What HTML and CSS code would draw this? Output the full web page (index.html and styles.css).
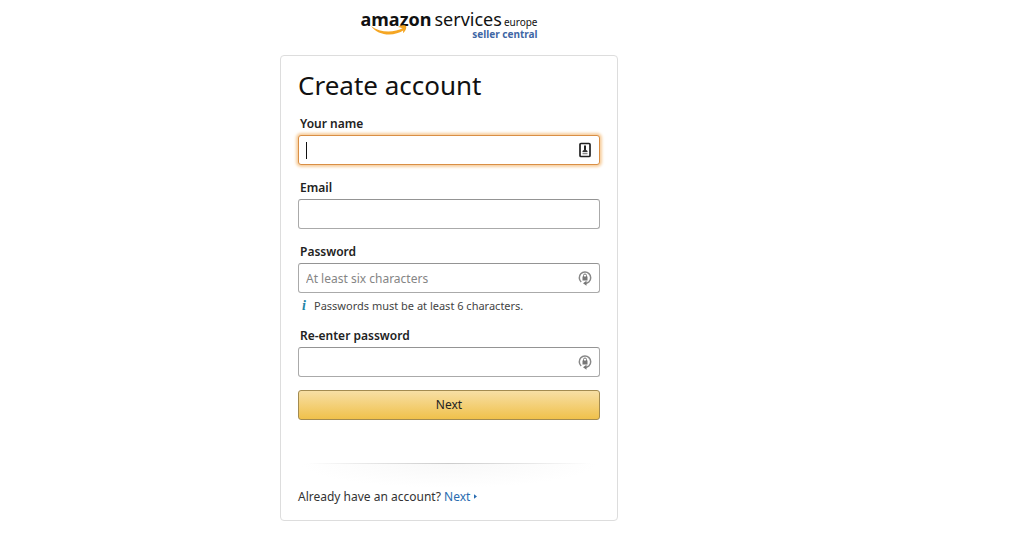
FILE: index.html
```html
<!DOCTYPE html>
<html lang="en">
<head>
<meta charset="utf-8">
<meta name="viewport" content="width=device-width, initial-scale=1">
<title>Create account</title>
<link rel="stylesheet" href="styles.css">
</head>
<body>
<main class="page">
  <header class="logo">
    <div class="logo-top"><span class="logo-amazon">amazon<svg class="smile" viewBox="0 0 40 12" aria-hidden="true"><path class="smile-curve" d="M1 2C10 9 24 9 33 4L34 6C24 13 8 12 1 2Z"/><path class="smile-curve" d="M28 3C31 1 35 1 36 2C37 4 35 8 33 9C33 6 35 4 28 3Z"/></svg></span><span class="logo-services">services</span><span class="logo-europe">europe</span></div>
    <div class="logo-sub">seller central</div>
  </header>
  <form class="card">
    <h1 class="title">Create account</h1>
    <div class="field">
      <label class="label" for="name">Your name</label>
      <div class="control">
        <input class="input input-active" id="name" type="text">
        <span class="caret"></span>
        <svg class="icon" viewBox="0 0 16 16" aria-hidden="true"><rect x="3" y="1.5" width="10" height="13" rx="1" fill="#fff" stroke="#222" stroke-width="1.7"/><path d="M8 3.5V8" stroke="#222" stroke-width="2"/><path d="M5.5 9Q8 6 10.500 9V10H5.500Z" fill="#333"/><path d="M5.500 11.500H10.500" stroke="#888" stroke-width="1.500"/></svg>
      </div>
    </div>
    <div class="field">
      <label class="label" for="email">Email</label>
      <div class="control"><input class="input" id="email" type="email"></div>
    </div>
    <div class="field field-hinted">
      <label class="label" for="password">Password</label>
      <div class="control">
        <input class="input" id="password" type="password" placeholder="At least six characters">
        <svg class="icon" viewBox="0 0 16 16" aria-hidden="true"><path d="M4.200 12A5.700 5.700 0 1 1 12 11.800L9 13.500" fill="none" stroke="#888" stroke-width="1.500"/><path d="M9.500 10.800V15.800L6 13.300Z" fill="#777"/><rect x="5.500" y="6.500" width="5" height="4" fill="#777"/><path d="M6.500 7V5.500a1.500 1.500 0 0 1 3 0V7" fill="none" stroke="#777"/></svg>
      </div>
      <p class="hint"><i class="info">i</i>Passwords must be at least 6 characters.</p>
    </div>
    <div class="field">
      <label class="label" for="again">Re-enter password</label>
      <div class="control">
        <input class="input" id="again" type="password">
        <svg class="icon" viewBox="0 0 16 16" aria-hidden="true"><path d="M4.200 12A5.700 5.700 0 1 1 12 11.800L9 13.500" fill="none" stroke="#888" stroke-width="1.500"/><path d="M9.500 10.800V15.800L6 13.300Z" fill="#777"/><rect x="5.500" y="6.500" width="5" height="4" fill="#777"/><path d="M6.500 7V5.500a1.500 1.500 0 0 1 3 0V7" fill="none" stroke="#777"/></svg>
      </div>
    </div>
    <button class="button" type="button">Next</button>
    <div class="divider"></div>
    <p class="signin">Already have an account? <a class="link" href="#">Next<svg class="arrow" viewBox="0 0 4 6" aria-hidden="true"><path d="M0 0L4 3L0 6Z"/></svg></a></p>
  </form>
</main>
</body>
</html>
```
FILE: styles.css
```css
* { box-sizing: border-box; }
body {
  margin: 0;
  background: #fff;
  color: #222;
  font: 12px/18px "Noto Sans", "Open Sans", sans-serif;
}
.page {
  display: flex;
  flex-direction: column;
  align-items: center;
  padding: 8px 126px 16px 0;
}
.logo {
  display: flex;
  flex-direction: column;
  color: #111;
  margin-bottom: 16px;
}
.logo-top { display: flex; align-items: baseline; line-height: 22px; }
.logo-amazon { position: relative; font-size: 18px; font-weight: 700; margin-right: 3px; }
.smile { position: absolute; left: 9px; top: 16px; width: 40px; height: 12px; }
.smile-curve { fill: #f5a623; }
.logo-services { font-size: 18px; margin-right: 2px; }
.logo-europe { font-size: 10px; line-height: 14px; }
.logo-sub {
  align-self: flex-end;
  color: #3f67a5;
  font-size: 10px;
  font-weight: 700;
  line-height: 9px;
}
.card {
  width: 100%;
  max-width: 338px;
  padding: 11px 17px 14px;
  border: 1px solid #ddd;
  border-radius: 4px;
}
.title {
  margin: 0 0 11px;
  color: #111;
  font-size: 26px;
  font-weight: 400;
  line-height: 36px;
}
.field { margin-bottom: 13px; }
.field-hinted { margin-bottom: 11px; }
.label {
  display: block;
  padding: 0 2px 2px;
  font-weight: 600;
  line-height: 19px;
}
.control { position: relative; }
.input {
  display: block;
  width: 100%;
  height: 30px;
  padding: 0 32px 0 7px;
  border: 1px solid #aaa;
  border-top-color: #949494;
  border-radius: 3px;
  outline: 0;
  background: #fff;
  color: #111;
  font: inherit;
}
.input::placeholder { color: #858585; opacity: 1; }
.input-active {
  border-color: #d98f45;
  box-shadow: 0 0 3px 2px #f7cf9f;
}
.caret { position: absolute; left: 8px; top: 7px; width: 1px; height: 17px; background: #111; }
.icon { position: absolute; right: 7px; top: 7px; width: 16px; height: 16px; }
.hint {
  display: flex;
  margin: 4px 0 0;
  padding-left: 4px;
  color: #444;
  font-size: 11px;
}
.info {
  width: 12px;
  color: #2384a6;
  font: italic 700 14px/18px "Liberation Serif", serif;
}
.button {
  display: block;
  width: 100%;
  height: 30px;
  border: 1px solid #a38b50;
  border-radius: 3px;
  background: linear-gradient(#f7dfa5, #f0c14b);
  color: #222;
  font: inherit;
}
.divider {
  height: 25px;
  margin-top: 43px;
  background:
    linear-gradient(90deg, transparent 3%, #ccc 50%, transparent 97%) top / 100% 1px no-repeat,
    radial-gradient(ellipse at top, #f8f8f8, #fff 70%);
}
.signin { margin: 0; color: #333; }
.link { color: #2a6cb0; text-decoration: none; }
.arrow { width: 3px; height: 5px; margin: 0 0 2px 4px; fill: #2a6cb0; }
```
